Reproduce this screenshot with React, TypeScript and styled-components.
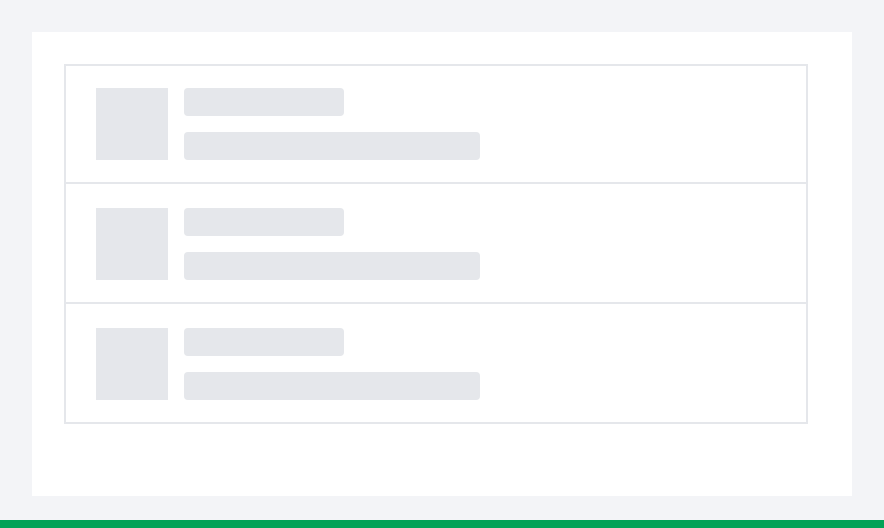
import React from "react";
import styled, { createGlobalStyle } from "styled-components";

const GlobalStyle = createGlobalStyle`
  html, body {
    margin: 0;
    padding: 0;
    background: #f3f4f7;
    font-family: "Inter", "Liberation Sans", sans-serif;
  }
  * { box-sizing: border-box; }
`;

const Page = styled.div`
  display: flex;
  flex-direction: column;
  min-height: 100vh;
`;

const Main = styled.main`
  padding: 32px 32px 0 32px;
`;

const Card = styled.section`
  background: #ffffff;
  height: 464px;
  padding: 32px;
`;

const List = styled.div`
  width: 744px;
  border: 2px solid #e5e7eb;
`;

const Row = styled.div`
  display: flex;
  gap: 16px;
  padding: 22px 30px;
  & + & {
    border-top: 2px solid #e5e7eb;
    padding-top: 24px;
  }
`;

const Thumb = styled.div`
  width: 72px;
  height: 72px;
  background: #e5e7eb;
  flex-shrink: 0;
`;

const Lines = styled.div`
  display: flex;
  flex-direction: column;
  gap: 16px;
`;

const Bar = styled.div<{ $w: number }>`
  width: ${(p) => p.$w}px;
  height: 28px;
  border-radius: 4px;
  background: #e5e7eb;
`;

const Footer = styled.div`
  margin-top: auto;
  height: 8px;
  background: #02a257;
`;

export default function App() {
  return (
    <>
      <GlobalStyle />
      <Page>
        <Main>
          <Card>
            <List>
              {[0, 1, 2].map((i) => (
                <Row key={i}>
                  <Thumb />
                  <Lines>
                    <Bar $w={160} />
                    <Bar $w={296} />
                  </Lines>
                </Row>
              ))}
            </List>
          </Card>
        </Main>
        <Footer />
      </Page>
    </>
  );
}
